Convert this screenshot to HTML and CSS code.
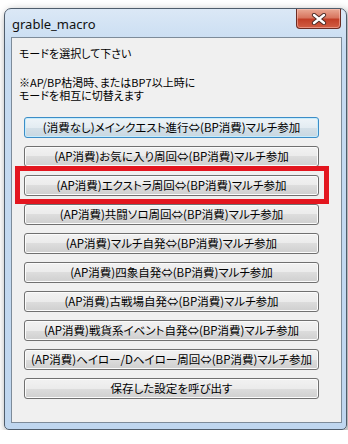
FILE: index.html
```html
<!DOCTYPE html>
<html lang="ja">
<head>
<meta charset="UTF-8">
<title>grable_macro</title>
<link rel="stylesheet" href="styles.css">
</head>
<body>

<div class="window">
  <div class="titlebar">
    <span class="title">grable_macro</span>
    <span class="close-btn">
      <svg width="16" height="12" viewBox="0 0 16 12">
        <path d="M3 2 L13 10 M13 2 L3 10" stroke="#4a2a24" stroke-width="4.2" stroke-linecap="round"/>
        <path d="M3 2 L13 10 M13 2 L3 10" stroke="#fff" stroke-width="2.4" stroke-linecap="round"/>
      </svg>
    </span>
  </div>

  <div class="client">
    <div class="msg">モードを選択して下さい</div>
    <div class="msg note">※AP/BP枯渇時、またはBP7以上時に</div>
    <div class="msg">モードを相互に切替えます</div>

    <div class="buttons">
      <button class="btn default">(消費なし)メインクエスト進行⇔(BP消費)マルチ参加</button>
      <button class="btn">(AP消費)お気に入り周回⇔(BP消費)マルチ参加</button>
      <div class="marked">
        <button class="btn">(AP消費)エクストラ周回⇔(BP消費)マルチ参加</button>
      </div>
      <button class="btn">(AP消費)共闘ソロ周回⇔(BP消費)マルチ参加</button>
      <button class="btn">(AP消費)マルチ自発⇔(BP消費)マルチ参加</button>
      <button class="btn">(AP消費)四象自発⇔(BP消費)マルチ参加</button>
      <button class="btn">(AP消費)古戦場自発⇔(BP消費)マルチ参加</button>
      <button class="btn">(AP消費)戦貨系イベント自発⇔(BP消費)マルチ参加</button>
      <button class="btn">(AP消費)ヘイロー/Dヘイロー周回⇔(BP消費)マルチ参加</button>
      <button class="btn">保存した設定を呼び出す</button>
    </div>
  </div>
</div>

</body>
</html>
```

FILE: styles.css
```css
/* General styles */
body {
  margin: 0;
  padding: 0;
  background-color: #fff;
  font-family: "Noto Sans CJK JP", sans-serif;
}

/* Window frame */
.window {
  width: 331px;
  height: 414px;
  margin: 8px 0 0 4px;
  padding: 0 4px 6px 6px;
  border: 1px solid #4f5d6c;
  border-radius: 7px 7px 5px 5px;
  background: linear-gradient(#dbe8f6, #c6dbf1 40px, #bfd6ef);
  box-shadow: 2px 3px 8px rgba(0, 0, 0, 0.45);
  display: flex;
  flex-direction: column;
}

.titlebar {
  height: 28px;
  display: flex;
  justify-content: space-between;
  align-items: flex-start;
}

.title {
  margin: 6px 0 0 1px;
  font-family: "Noto Sans", sans-serif;
  font-size: 13px;
  color: #111;
}

.close-btn {
  width: 43px;
  height: 19px;
  margin-right: 1px;
  border: 1px solid #6b2b22;
  border-top: none;
  border-radius: 0 0 4px 4px;
  background: linear-gradient(#eaa994, #d8765f 45%, #c23f27 55%, #d15e44);
  box-shadow: inset 0 0 0 1px rgba(255, 200, 190, 0.5);
  display: flex;
  justify-content: center;
  align-items: center;
}

/* Client area */
.client {
  flex: 1;
  border: 1px solid #7d8b99;
  background-color: #f0f0f0;
  padding: 9px 0 0 7px;
}

.msg {
  font-size: 11px;
  line-height: 13px;
  font-feature-settings: "palt";
  color: #000;
}

.note {
  margin-top: 16px;
}

.buttons {
  margin: 15px 0 0 5px;
  width: 295px;
  display: flex;
  flex-direction: column;
  gap: 8px;
}

.btn {
  display: block;
  width: 100%;
  height: 21px;
  padding: 0;
  border: 1px solid #707070;
  border-radius: 3px;
  background: linear-gradient(#f2f2f2, #ebebeb 50%, #dddddd 50%, #cfcfcf);
  box-shadow: inset 0 0 0 1px #fbfbfb;
  font-family: "Noto Sans CJK JP", sans-serif;
  font-size: 11.5px;
  line-height: 19px;
  font-feature-settings: "palt";
  color: #000;
}

.btn.default {
  border-color: #3c8dc7;
  background: linear-gradient(#eef4f8, #e3ecf2 50%, #d4e0e8 50%, #c8d7e1);
  box-shadow: inset 0 0 0 1px #c6ecfc;
}

/* Red highlight */
.marked {
  position: relative;
}

.marked::after {
  content: "";
  position: absolute;
  top: -9px;
  left: -9px;
  right: -10px;
  bottom: -8px;
  border: 5px solid #e3161f;
}
```
